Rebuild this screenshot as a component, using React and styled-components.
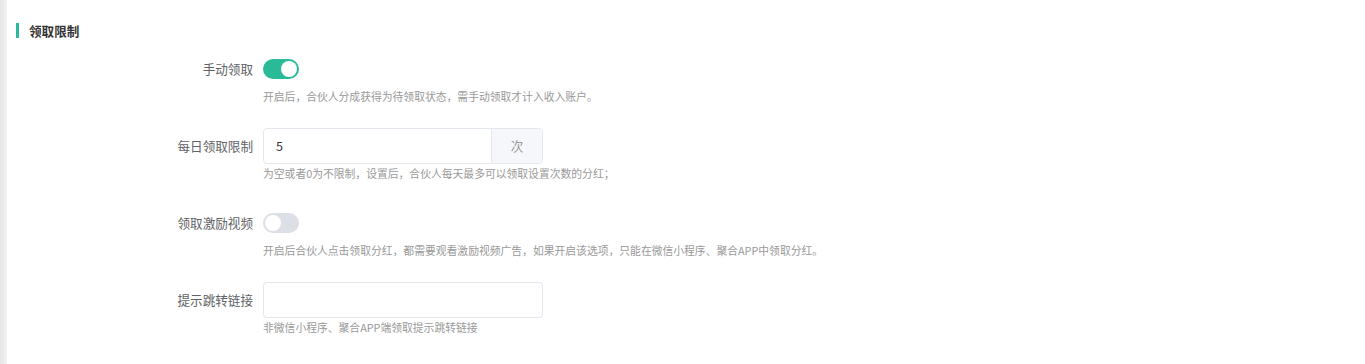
import React from 'react';
import styled, { createGlobalStyle } from 'styled-components';

const GlobalStyle = createGlobalStyle`
  html, body {
    margin: 0;
    padding: 0;
    background: #fff;
    font-family: "Noto Sans CJK SC", "Liberation Sans", sans-serif;
  }
`;

const Page = styled.div`
  display: flex;
  min-height: 364px;
  background: #fff;
`;

const Strip = styled.div`
  width: 7px;
  flex-shrink: 0;
  background: linear-gradient(to right, #e6e6e6, #f2f2f2);
`;

const Content = styled.div`
  flex: 1;
  padding: 23px 0 0 9px;
`;

const SectionTitle = styled.h2`
  margin: 0;
  height: 15px;
  display: flex;
  align-items: center;
  border-left: 3px solid #2bba97;
  padding-left: 10px;
  font-size: 12.6px;
  font-weight: 700;
  color: #333;
`;

const Form = styled.div`
  display: flex;
  flex-direction: column;
  gap: 23px;
  padding-top: 13px;
`;

const Row = styled.div`
  display: grid;
  grid-template-columns: 247px 1fr;
`;

const Label = styled.div`
  height: 36px;
  line-height: 36px;
  text-align: right;
  padding-right: 10px;
  font-size: 12.6px;
  color: #606266;
`;

const Field = styled.div`
  display: flex;
  flex-direction: column;
`;

const Control = styled.div`
  height: 36px;
  display: flex;
  align-items: center;
`;

const Switch = styled.span`
  position: relative;
  width: 36px;
  height: 20px;
  border-radius: 10px;
  background: ${p => (p.$on ? '#2bba97' : '#dcdfe6')};

  &::after {
    content: '';
    position: absolute;
    top: 2px;
    left: ${p => (p.$on ? '18px' : '2px')};
    width: 16px;
    height: 16px;
    border-radius: 50%;
    background: #fff;
  }
`;

const InputGroup = styled.div`
  display: flex;
  width: 280px;
  height: 36px;
  box-sizing: border-box;
  border: 1px solid #e4e7ed;
  border-radius: 4px;
  overflow: hidden;
`;

const Input = styled.div`
  flex: 1;
  padding-left: 12px;
  line-height: 34px;
  font-size: 12.6px;
  color: #333;
`;

const Addon = styled.div`
  width: 50px;
  border-left: 1px solid #e4e7ed;
  background: #f5f7fa;
  color: #999;
  font-size: 12.6px;
  text-align: center;
  line-height: 34px;
`;

const Help = styled.div`
  line-height: 18px;
  font-size: 10.8px;
  color: #999;
  white-space: nowrap;
`;

function App() {
  return (
    <Page>
      <GlobalStyle />
      <Strip />
      <Content>
        <SectionTitle>领取限制</SectionTitle>
        <Form>
          <Row>
            <Label>手动领取</Label>
            <Field>
              <Control><Switch $on /></Control>
              <Help>开启后，合伙人分成获得为待领取状态，需手动领取才计入收入账户。</Help>
            </Field>
          </Row>
          <Row>
            <Label>每日领取限制</Label>
            <Field>
              <InputGroup>
                <Input>5</Input>
                <Addon>次</Addon>
              </InputGroup>
              <Help>为空或者0为不限制，设置后，合伙人每天最多可以领取设置次数的分红；</Help>
            </Field>
          </Row>
          <Row>
            <Label>领取激励视频</Label>
            <Field>
              <Control><Switch /></Control>
              <Help>开启后合伙人点击领取分红，都需要观看激励视频广告，如果开启该选项，只能在微信小程序、聚合APP中领取分红。</Help>
            </Field>
          </Row>
          <Row>
            <Label>提示跳转链接</Label>
            <Field>
              <InputGroup>
                <Input />
              </InputGroup>
              <Help>非微信小程序、聚合APP端领取提示跳转链接</Help>
            </Field>
          </Row>
        </Form>
      </Content>
    </Page>
  );
}

export default App;
